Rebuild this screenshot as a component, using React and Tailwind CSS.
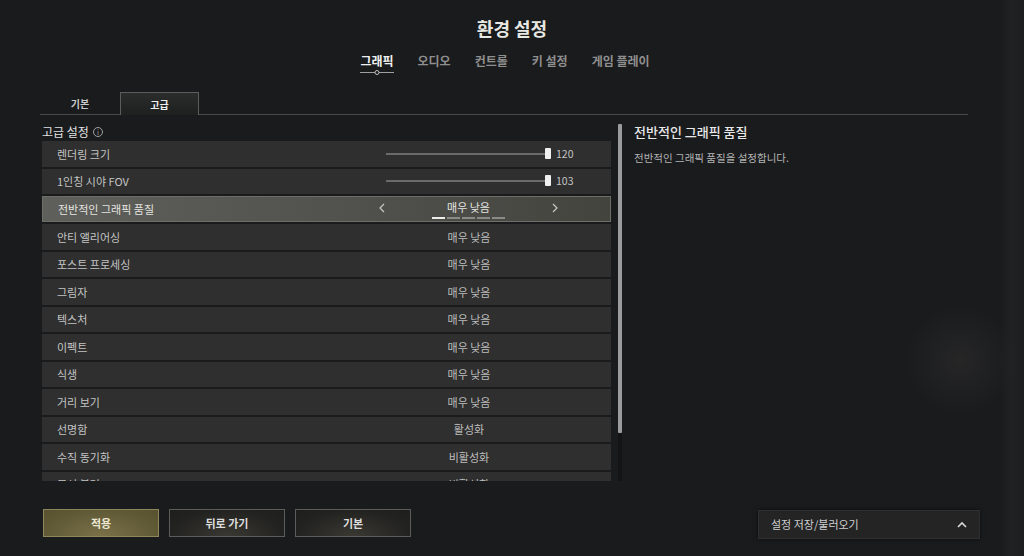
import React from "react";

const FONT = { fontFamily: '"Noto Sans CJK KR", "Noto Sans", sans-serif' };

const rows = [
  { label: "렌더링 크기", type: "slider", value: "120" },
  { label: "1인칭 시야 FOV", type: "slider", value: "103" },
  { label: "전반적인 그래픽 품질", type: "select", value: "매우 낮음" },
  { label: "안티 앨리어싱", value: "매우 낮음" },
  { label: "포스트 프로세싱", value: "매우 낮음" },
  { label: "그림자", value: "매우 낮음" },
  { label: "텍스처", value: "매우 낮음" },
  { label: "이펙트", value: "매우 낮음" },
  { label: "식생", value: "매우 낮음" },
  { label: "거리 보기", value: "매우 낮음" },
  { label: "선명함", value: "활성화" },
  { label: "수직 동기화", value: "비활성화" },
  { label: "모션 블러", value: "비활성화" },
];

function Row({ row }) {
  if (row.type === "select") {
    return (
      <div className="h-[26px] shrink-0 flex items-center pl-[15px] border border-[#6e6e68] bg-gradient-to-r from-[#5f5f5b] via-[#52524e] to-[#44443f]">
        <div className="w-[321px] text-[11px] text-[#e4e4e0]">{row.label}</div>
        <div className="w-[180px] relative h-full flex items-center justify-between">
          <svg width="8" height="10" viewBox="0 0 8 10" className="ml-[-1px] mt-[-3px]">
            <path d="M6 1 L2 5 L6 9" stroke="#c8c8c4" strokeWidth="1.2" fill="none" />
          </svg>
          <div className="text-[11px] text-[#e4e4e0] mt-[-3px]">{row.value}</div>
          <svg width="8" height="10" viewBox="0 0 8 10" className="mt-[-3px]">
            <path d="M2 1 L6 5 L2 9" stroke="#c8c8c4" strokeWidth="1.2" fill="none" />
          </svg>
          <div className="absolute left-[53px] bottom-[2px] flex gap-[2px]">
            <div className="w-[13px] h-[2px] bg-[#ececec]" />
            <div className="w-[13px] h-[2px] bg-[#8a8a86]" />
            <div className="w-[13px] h-[2px] bg-[#8a8a86]" />
            <div className="w-[13px] h-[2px] bg-[#8a8a86]" />
            <div className="w-[13px] h-[2px] bg-[#8a8a86]" />
          </div>
        </div>
      </div>
    );
  }
  if (row.type === "slider") {
    return (
      <div className="h-[25.5px] shrink-0 flex items-center pl-[15px] bg-[#2f2f2f]">
        <div className="w-[329px] text-[11px] text-[#c4c4c4]">{row.label}</div>
        <div className="relative w-[162px] h-[12px] flex items-center">
          <div className="w-full h-[2px] bg-[#6a6a6a]" />
          <div className="absolute right-[-3px] top-0 w-[6px] h-[11px] rounded-[1px] bg-[#f0f0f0]" />
        </div>
        <div className="ml-[8px] text-[10.5px] text-[#c4c4c4]">{row.value}</div>
      </div>
    );
  }
  return (
    <div className="h-[25.5px] shrink-0 flex items-center pl-[15px] bg-[#2f2f2f]">
      <div className="w-[322px] text-[11px] text-[#c4c4c4]">{row.label}</div>
      <div className="w-[180px] text-center text-[11px] text-[#bdbdbd]">{row.value}</div>
    </div>
  );
}

export default function App() {
  const tabs = ["그래픽", "오디오", "컨트롤", "키 설정", "게임 플레이"];
  return (
    <div
      style={FONT}
      className="w-[1024px] h-[556px] overflow-hidden relative bg-[#1a1b1d] flex flex-col"
    >
      <div className="absolute right-[0px] top-[0px] w-[24px] h-[556px] bg-gradient-to-r from-transparent via-[#212224] to-[#1c1d1f] pointer-events-none" />
      <div className="absolute left-[900px] top-[300px] w-[120px] h-[120px] bg-[radial-gradient(circle,#262627_0%,transparent_65%)] pointer-events-none" />

      {/* header */}
      <div className="h-[42px] pt-[15px] text-center text-[18px] font-bold text-[#e8e8e2] leading-[26px]">
        환경 설정
      </div>
      <div className="h-[50px] flex justify-center gap-[24px] pr-[14px] pt-[11px]">
        {tabs.map((t, i) => (
          <div key={t} className="relative h-[18px]">
            <div
              className={
                "text-[12px] font-bold leading-[16px] " +
                (i === 0 ? "text-[#f0f0f0]" : "text-[#8f8f8f]")
              }
            >
              {t}
            </div>
            {i === 0 && (
              <div className="absolute left-0 right-0 top-[19px] h-[1px] bg-[#a0a0a0]">
                <div className="absolute left-1/2 -translate-x-1/2 top-[-2px] w-[5px] h-[5px] rounded-full border border-[#c0c0c0] bg-[#1a1b1d]" />
              </div>
            )}
          </div>
        ))}
      </div>

      {/* sub tabs */}
      <div className="ml-[40px] w-[928px] h-[23px] flex border-b border-[#4a4a4a]">
        <div className="w-[80px] flex items-center justify-center text-[10px] font-bold text-[#c8c8c8]">
          기본
        </div>
        <div className="w-[79px] mb-[-1px] flex items-center justify-center text-[10px] font-bold text-[#f0f0f0] border border-b-0 border-[#5c5c5c] bg-gradient-to-b from-[#2a2d2b] to-[#1e201f]">
          고급
        </div>
      </div>

      {/* content */}
      <div className="flex pl-[42px] pt-[8px] h-[374px]">
        <div className="w-[569px] flex flex-col">
          <div className="h-[18px] flex items-center gap-[4px] text-[12px] text-[#e2e2e2] leading-none">
            고급 설정
            <span className="w-[10px] h-[10px] rounded-full border border-[#a0a0a0] text-[7px] flex items-center justify-center text-[#a0a0a0]">
              i
            </span>
          </div>
          <div className="mt-[0px] h-[340px] overflow-hidden flex flex-col gap-[2px]">
            {rows.map((r) => (
              <Row key={r.label} row={r} />
            ))}
          </div>
        </div>
        <div className="ml-[7px] mt-[1px] w-[4px] h-[357px] flex flex-col bg-[#141416]">
          <div className="h-[309px] w-full bg-[#9c9c9c] rounded-[1px]" />
        </div>
        <div className="ml-[12px] flex flex-col">
          <div className="text-[13px] text-[#e8e8e8] leading-[18px] font-medium">
            전반적인 그래픽 품질
          </div>
          <div className="mt-[9px] text-[10.5px] text-[#b4b4b4]">
            전반적인 그래픽 품질을 설정합니다.
          </div>
        </div>
      </div>

      {/* footer */}
      <div className="flex items-center pl-[43px] pr-[44px] mt-[18px]">
        <button className="w-[116px] h-[28px] border border-[#8f875c] bg-[radial-gradient(ellipse_at_50%_100%,#7a7148_0%,#5f5936_70%,#57512f_100%)] text-[11px] font-bold text-[#ece8d4]">
          적용
        </button>
        <button className="ml-[10px] w-[116px] h-[28px] border border-[#5c5c5a] bg-[radial-gradient(ellipse_at_50%_100%,#3a3832_0%,#222220_70%,#1e1e1d_100%)] text-[11px] font-bold text-[#dedede]">
          뒤로 가기
        </button>
        <button className="ml-[10px] w-[116px] h-[28px] border border-[#5c5c5a] bg-[radial-gradient(ellipse_at_50%_100%,#3a3832_0%,#222220_70%,#1e1e1d_100%)] text-[11px] font-bold text-[#dedede]">
          기본
        </button>
        <div className="ml-auto w-[222px] h-[29px] mt-[3px] flex items-center justify-between pl-[12px] pr-[12px] bg-[#242425] border border-[#2f2f30] shadow-[0_0_4px_rgba(0,0,0,0.6)]">
          <span className="text-[11px] text-[#cfcfcf]">설정 저장/불러오기</span>
          <svg width="10" height="7" viewBox="0 0 10 7">
            <path d="M1 6 L5 2 L9 6" stroke="#d8d8d8" strokeWidth="1.6" fill="none" />
          </svg>
        </div>
      </div>
    </div>
  );
}
